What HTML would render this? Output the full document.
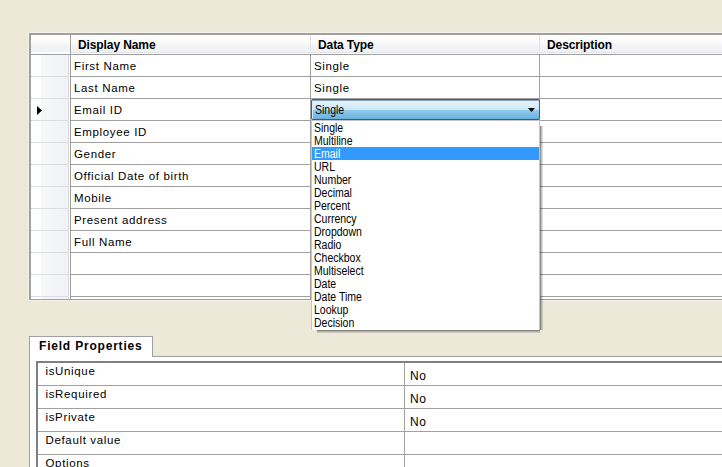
<!DOCTYPE html>
<html><head><meta charset="utf-8">
<style>
*{margin:0;padding:0;box-sizing:border-box}
html,body{width:722px;height:467px;overflow:hidden;background:#ECE9D8;font-family:"Liberation Sans",sans-serif;font-size:11px;color:#000}
.a{position:absolute}
.t{position:absolute;white-space:nowrap;line-height:13px}
.hl{position:absolute;height:1px;background:#a0a0a0}
.vl{position:absolute;width:1px;background:#a0a0a0}
.g{font-size:11.5px;letter-spacing:0.65px}
.hb{font-weight:bold;font-size:12px;letter-spacing:-0.1px}
.dd{font-size:12px;transform:scaleX(0.875);transform-origin:0 0}
</style></head><body>

<div class="a" style="left:28px;top:32px;width:700px;height:269px;background:#f4f2e9"></div>
<div class="a" style="left:29px;top:33px;width:700px;height:267px;background:#fff;border-top:2px solid #a0a0a0;border-left:2px solid #a0a0a0;border-bottom:1px solid #a0a0a0"></div>
<div class="a" style="left:31px;top:35px;width:700px;height:17px;background:linear-gradient(#fdfdfe 0,#fcfcfd 40%,#f3f4f7 60%,#eff1f4 100%)"></div>
<div class="a" style="left:71px;top:52px;width:660px;height:1px;background:#e2e4e8"></div>
<div class="a" style="left:31px;top:53px;width:700px;height:1px;background:#fbfbfc"></div>
<div class="hl" style="left:31px;top:54px;width:700px"></div>
<div class="a" style="left:31px;top:55px;width:39px;height:244px;background:linear-gradient(90deg,#fff 0,#fff 10px,#f6f7f9 10px,#f1f2f5 37px,#d9dadd 37px,#d9dadd 38px,#fff 38px)"></div>
<div class="vl" style="left:70px;top:35px;height:264px"></div>
<div class="a" style="left:310px;top:35px;width:1px;height:18px;background:#e0e3e8"></div>
<div class="a" style="left:539px;top:35px;width:1px;height:18px;background:#e0e3e8"></div>
<div class="vl" style="left:310px;top:55px;height:244px"></div>
<div class="vl" style="left:539px;top:55px;height:244px"></div>
<div class="hl" style="left:71px;top:76px;width:660px"></div>
<div class="a" style="left:31px;top:76px;width:37px;height:1px;background:#dcdddf"></div>
<div class="hl" style="left:71px;top:98px;width:660px"></div>
<div class="a" style="left:31px;top:98px;width:37px;height:1px;background:#dcdddf"></div>
<div class="hl" style="left:71px;top:120px;width:660px"></div>
<div class="a" style="left:31px;top:120px;width:37px;height:1px;background:#dcdddf"></div>
<div class="hl" style="left:71px;top:142px;width:660px"></div>
<div class="a" style="left:31px;top:142px;width:37px;height:1px;background:#dcdddf"></div>
<div class="hl" style="left:71px;top:164px;width:660px"></div>
<div class="a" style="left:31px;top:164px;width:37px;height:1px;background:#dcdddf"></div>
<div class="hl" style="left:71px;top:186px;width:660px"></div>
<div class="a" style="left:31px;top:186px;width:37px;height:1px;background:#dcdddf"></div>
<div class="hl" style="left:71px;top:208px;width:660px"></div>
<div class="a" style="left:31px;top:208px;width:37px;height:1px;background:#dcdddf"></div>
<div class="hl" style="left:71px;top:230px;width:660px"></div>
<div class="a" style="left:31px;top:230px;width:37px;height:1px;background:#dcdddf"></div>
<div class="hl" style="left:71px;top:252px;width:660px"></div>
<div class="a" style="left:31px;top:252px;width:37px;height:1px;background:#dcdddf"></div>
<div class="hl" style="left:71px;top:274px;width:660px"></div>
<div class="a" style="left:31px;top:274px;width:37px;height:1px;background:#dcdddf"></div>
<div class="hl" style="left:71px;top:296px;width:660px"></div>
<div class="a" style="left:31px;top:296px;width:37px;height:1px;background:#dcdddf"></div>
<div class="t hb" style="left:78px;top:39px">Display Name</div>
<div class="t hb" style="left:318px;top:39px">Data Type</div>
<div class="t hb" style="left:547px;top:39px">Description</div>
<div class="t g" style="left:74px;top:60px">First Name</div>
<div class="t g" style="left:74px;top:82px">Last Name</div>
<div class="t g" style="left:74px;top:104px">Email ID</div>
<div class="t g" style="left:74px;top:126px">Employee ID</div>
<div class="t g" style="left:74px;top:148px">Gender</div>
<div class="t g" style="left:74px;top:170px">Official Date of birth</div>
<div class="t g" style="left:74px;top:192px">Mobile</div>
<div class="t g" style="left:74px;top:214px">Present address</div>
<div class="t g" style="left:74px;top:236px">Full Name</div>
<div class="t g" style="left:314px;top:60px">Single</div>
<div class="t g" style="left:314px;top:82px">Single</div>
<svg class="a" style="left:37px;top:106px" width="6" height="9"><path d="M0 0L5 4.5L0 9Z" fill="#000"/></svg>
<div class="a" style="left:311px;top:99px;width:229px;height:21px;border:1px solid #3a6282;border-top-color:#44607a;border-bottom-color:#2c5d82;border-radius:2px;box-shadow:inset 0 1px 0 #8aa3b6,inset 1px 0 0 #d8ecf7;background:linear-gradient(#e6f3fa 0,#d9eef9 30%,#c8e6f7 52.6%,#91cbec 52.6%,#6ab0dc 100%)"></div>
<div class="t dd" style="left:315px;top:104px">Single</div>
<svg class="a" style="left:528px;top:108px" width="7" height="4"><path d="M0 0H7L3.5 4Z" fill="#000"/></svg>
<div class="a" style="left:540px;top:126px;width:3px;height:204px;background:linear-gradient(90deg,rgba(0,0,0,.5),rgba(0,0,0,.25),rgba(0,0,0,.08))"></div>
<div class="a" style="left:317px;top:330px;width:223px;height:3px;background:linear-gradient(rgba(0,0,0,.5),rgba(0,0,0,.25),rgba(0,0,0,.08))"></div>
<div class="a" style="left:311px;top:120px;width:229px;height:210px;background:#fff;border:1px solid #c4c4cc;border-bottom:none"></div>
<div class="a" style="left:312px;top:147px;width:227px;height:13px;background:#3399ff"></div>
<div class="t dd" style="left:314px;top:122px;">Single</div>
<div class="t dd" style="left:314px;top:135px;">Multiline</div>
<div class="t dd" style="left:314px;top:148px;color:#fff;">Email</div>
<div class="t dd" style="left:314px;top:161px;">URL</div>
<div class="t dd" style="left:314px;top:174px;">Number</div>
<div class="t dd" style="left:314px;top:187px;">Decimal</div>
<div class="t dd" style="left:314px;top:200px;">Percent</div>
<div class="t dd" style="left:314px;top:213px;">Currency</div>
<div class="t dd" style="left:314px;top:226px;">Dropdown</div>
<div class="t dd" style="left:314px;top:239px;">Radio</div>
<div class="t dd" style="left:314px;top:252px;">Checkbox</div>
<div class="t dd" style="left:314px;top:265px;">Multiselect</div>
<div class="t dd" style="left:314px;top:278px;">Date</div>
<div class="t dd" style="left:314px;top:291px;">Date Time</div>
<div class="t dd" style="left:314px;top:304px;">Lookup</div>
<div class="t dd" style="left:314px;top:317px;">Decision</div>
<div class="a" style="left:29px;top:336px;width:124px;height:22px;background:#fff;border:1px solid #a0a0a0;border-bottom:none"></div>
<div class="a" style="left:152px;top:356px;width:600px;height:1px;background:#a0a0a0"></div>
<div class="a" style="left:29px;top:357px;width:700px;height:120px;background:#fff;border-left:1px solid #a0a0a0"></div>
<div class="t" style="left:39px;top:340px;font-weight:bold;font-size:12px;letter-spacing:0.8px">Field Properties</div>
<div class="a" style="left:36px;top:361px;width:700px;height:120px;background:#fff;border-top:2px solid #808080;border-left:2px solid #808080"></div>
<div class="vl" style="left:404px;top:363px;height:110px"></div>
<div class="hl" style="left:38px;top:385px;width:700px"></div>
<div class="hl" style="left:38px;top:408px;width:700px"></div>
<div class="hl" style="left:38px;top:431px;width:700px"></div>
<div class="hl" style="left:38px;top:454px;width:700px"></div>
<div class="t g" style="left:45.5px;top:365px">isUnique</div>
<div class="t g" style="left:45.5px;top:388px">isRequired</div>
<div class="t g" style="left:45.5px;top:411px">isPrivate</div>
<div class="t g" style="left:45.5px;top:434px">Default value</div>
<div class="t g" style="left:45.5px;top:457px">Options</div>
<div class="t" style="left:410px;top:370px;font-size:12px;letter-spacing:0.5px">No</div>
<div class="t" style="left:410px;top:393px;font-size:12px;letter-spacing:0.5px">No</div>
<div class="t" style="left:410px;top:416px;font-size:12px;letter-spacing:0.5px">No</div>
</body></html>
